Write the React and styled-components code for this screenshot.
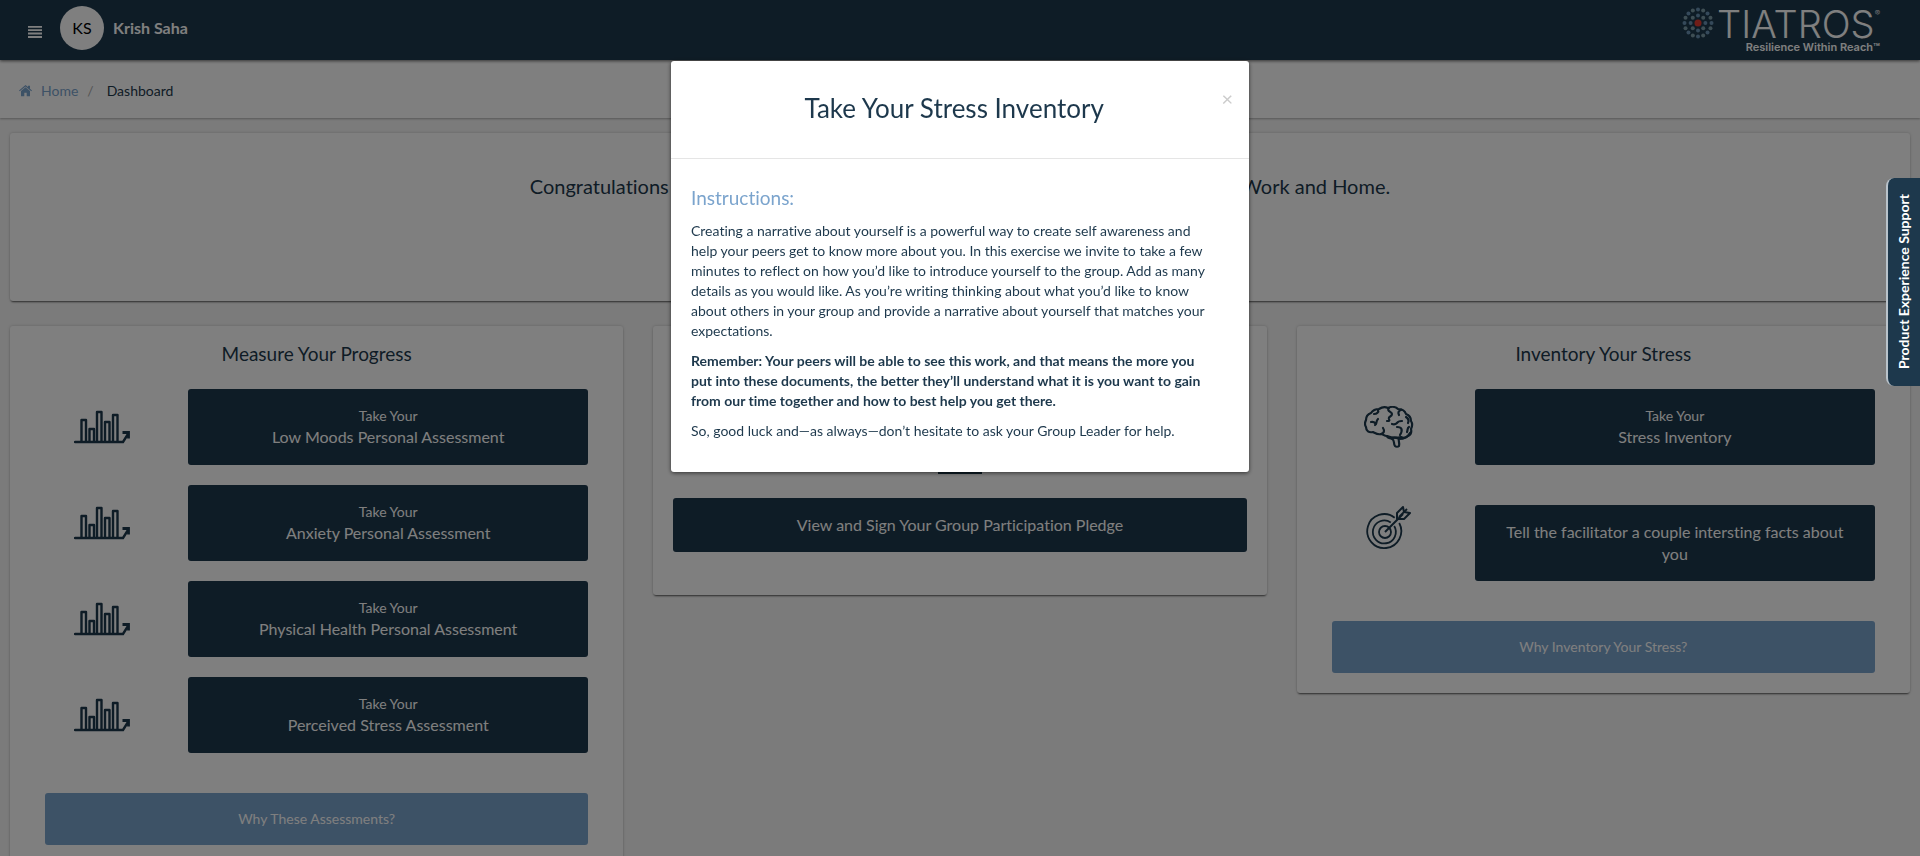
import React from "react";
import styled, { createGlobalStyle, css } from "styled-components";

const NAVY = "#1d384c";
const BLUE = "#7ba4cd";

const GlobalStyle = createGlobalStyle`
  *, *::before, *::after { box-sizing: border-box; }
  body {
    margin: 0;
    overflow: hidden;
    background: #f6f6f6;
    color: ${NAVY};
    font: 14px/20px Lato, "Liberation Sans", sans-serif;
    font-variant-ligatures: none;
  }
  h1, h2, h3, p { margin: 0; font-weight: 400; }
  button { font: inherit; cursor: pointer; }
`;

const Header = styled.header`
  display: flex;
  align-items: center;
  justify-content: space-between;
  height: 60px;
  padding: 0 40px 0 28px;
  background: ${NAVY};
  box-shadow: 0 1px 3px rgba(0, 0, 0, 0.6);
  position: relative;
`;

const UserArea = styled.div`
  display: flex;
  align-items: center;
  padding-bottom: 4px;
`;

const MenuButton = styled.button`
  display: flex;
  margin: 8px 18px 0 0;
  padding: 0;
  border: 0;
  background: none;
  color: #fff;
`;

const Avatar = styled.span`
  display: grid;
  place-items: center;
  width: 44px;
  height: 44px;
  margin-right: 9px;
  border-radius: 50%;
  background: #fff;
  color: #000;
  font-size: 16px;
`;

const UserName = styled.span`
  color: #fff;
  font-size: 16px;
  font-weight: 700;
`;

const Brand = styled.a`
  display: flex;
  align-items: flex-start;
  gap: 3px;
  height: 46px;
  color: #fff;
  text-decoration: none;
`;

const BrandWords = styled.span`
  display: flex;
  flex-direction: column;
  align-items: flex-end;
`;

const BrandName = styled.span`
  display: flex;
  font-family: Inter, Lato, sans-serif;
  font-size: 38px;
  font-weight: 300;
  line-height: 34px;
`;

const BrandMark = styled.span`
  font-size: 8px;
  line-height: 12px;
`;

const Tagline = styled.span`
  font-family: Inter, Lato, sans-serif;
  font-size: 11px;
  font-weight: 600;
  line-height: 12px;
`;

const Breadcrumb = styled.nav`
  display: flex;
  align-items: center;
  gap: 9px;
  height: 58px;
  padding: 4px 19px 0;
  background: #fff;
  box-shadow: 0 1px 2px rgba(0, 0, 0, 0.3);
`;

const Crumb = styled.a`
  display: flex;
  align-items: center;
  gap: 9px;
  color: ${BLUE};
  text-decoration: none;
`;

const Slash = styled.span`
  margin-right: 4px;
  color: #aaa;
`;

const Main = styled.main`
  display: flex;
  flex-direction: column;
  gap: 25px;
  padding: 15px 10px;
`;

const Card = styled.section`
  border-radius: 3px;
  background: #fff;
  box-shadow: 0 2px 2px -1px rgba(0, 0, 0, 0.6), 0 0 3px rgba(0, 0, 0, 0.2);
`;

const Banner = styled(Card)`
  height: 168px;
  padding-top: 41px;
  font-size: 20px;
  line-height: 24px;
  text-align: center;
`;

const Columns = styled.div`
  display: grid;
  grid-template-columns: repeat(3, 1fr);
  align-items: start;
  gap: 30px;
`;

const Column = styled(Card)`
  display: flex;
  flex-direction: column;
  padding: 16px ${(p) => (p.$wide ? "20px 43px" : "35px 20px")};
`;

const ColumnTitle = styled.h2`
  margin-bottom: 23px;
  font-size: 19px;
  line-height: 24px;
  text-align: center;
`;

const Rows = styled.div`
  display: flex;
  flex-direction: column;
  gap: ${(p) => p.$gap}px;
`;

const Row = styled.div`
  display: grid;
  grid-template-columns: 21% 1fr;
  align-items: ${(p) => (p.$top ? "start" : "center")};
  column-gap: 29px;
`;

const RowIcon = styled.span`
  display: flex;
  justify-content: center;
`;

const solid = css`
  width: 100%;
  border: 0;
  border-radius: 3px;
  color: #fff;
`;

const ActionButton = styled.button`
  ${solid}
  min-height: ${(p) => (p.$slim ? 54 : 76)}px;
  padding: 4px 20px;
  background: ${NAVY};
  font-size: 16px;
  line-height: 22px;
`;

const Lead = styled.span`
  display: block;
  font-size: 14px;
  line-height: 20px;
`;

const WhyButton = styled.button`
  ${solid}
  height: 52px;
  margin-top: 40px;
  background: ${BLUE};
`;

const PledgeIcon = styled.span`
  display: flex;
  align-items: flex-end;
  justify-content: center;
  height: 156px;
  padding-bottom: 24px;
`;

const Backdrop = styled.div`
  position: fixed;
  inset: 0;
  display: flex;
  align-items: flex-start;
  justify-content: center;
  padding-top: 61px;
  background: rgba(0, 0, 0, 0.5);
`;

const Dialog = styled.section`
  width: 578px;
  max-width: 100%;
  border-radius: 3px;
  background: #fff;
  box-shadow: 0 1px 4px rgba(0, 0, 0, 0.6);
`;

const DialogHead = styled.div`
  display: flex;
  padding: 29px 16px 32px;
  border-bottom: 1px solid #e5e5e5;
`;

const DialogTitle = styled.h1`
  flex: 1;
  font-size: 26px;
  line-height: 36px;
  text-align: center;
`;

const CloseButton = styled.button`
  align-self: flex-start;
  padding: 0;
  border: 0;
  background: none;
  color: #ccc;
  font-size: 20px;
  line-height: 16px;
`;

const DialogBody = styled.div`
  display: flex;
  flex-direction: column;
  gap: 10px;
  padding: 26px 34px 31px 20px;
`;

const DialogHeading = styled.h3`
  color: ${BLUE};
  font-size: 19px;
  line-height: 26px;
`;

const Strong = styled.strong`
  font-weight: 700;
`;

const SupportTab = styled.button`
  position: fixed;
  top: 178px;
  right: 0;
  width: 34px;
  height: 208px;
  padding: 0;
  border: 0 solid #b9c3cb;
  border-left-width: 2px;
  border-radius: 8px 0 0 8px;
  background: ${NAVY};
  color: #fff;
  font-size: 14px;
  font-weight: 700;
  writing-mode: sideways-lr;
`;

function ring(count, radius, size, colors) {
  return Array.from({ length: count }, (_, i) => {
    const a = (i * 2 * Math.PI) / count;
    return (
      <circle
        key={`${radius}-${i}`}
        cx={16 + radius * Math.sin(a)}
        cy={16 - radius * Math.cos(a)}
        r={size}
        fill={colors[i % colors.length]}
      />
    );
  });
}

const LogoDots = () => (
  <svg width="32" height="32" viewBox="0 0 32 32" aria-hidden="true">
    {ring(16, 13.5, 2, ["#6a93b5", "#7d9ca8"])}
    {ring(8, 7.4, 2, ["#6a93b5", "#7d9ca8"])}
    <circle cx="16" cy="16" r="3.5" fill="#e03a30" />
  </svg>
);

const MenuIcon = () => (
  <svg width="14" height="12" viewBox="0 0 14 12" fill="currentColor" aria-hidden="true">
    <path d="M0 0h14v1.800H0zM0 3.300h14v1.800H0zM0 6.600h14v1.800H0zM0 10h14v2H0z" />
  </svg>
);

const HomeIcon = () => (
  <svg width="13" height="12" viewBox="0 0 13 12" fill="currentColor" aria-hidden="true">
    <path d="M6.5 2.2 11 6v5.2H7.7V7.8H5.3v3.4H2V6zM6.5 0 9 2V.7h2v3l2 1.8-.7.8L6.5 1.5.7 6.3 0 5.5z" />
  </svg>
);

const ChartIcon = () => (
  <svg width="56" height="36" viewBox="0 0 56 36" fill="none" stroke={NAVY} strokeWidth="2.400" aria-hidden="true">
    <path d="M1 33h48l5-8" strokeLinecap="round" />
    <path d="M48.500 23.500h6v6" strokeWidth="2.800" />
    <path d="M7.500 33V11h4.500v22M15.500 33V20h4.500v13M23 33V3h4.500v30M31 33V13h4.500v20M39 33V6h4.500v27" strokeLinejoin="round" />
  </svg>
);

const BrainIcon = () => (
  <svg width="50" height="42" viewBox="0 0 50 42" fill="none" stroke={NAVY} strokeWidth="2.200" strokeLinecap="round" strokeLinejoin="round" aria-hidden="true">
    <path d="M23 30c-3 0-4-2-6-2-3 1-6-1-8-2-4 1-7-1-7-5-2-3-1-5 0-7 0-4 2-6 5-7 2-3 5-4 8-4 3-2 7-2 9-1 4-2 8-1 10 1 4 0 7 2 8 5 3 1 5 4 5 7 2 3 1 6 0 8 1 4-1 6-3 7-2 2-5 2-7 1-4 1-9 1-14-1z" />
    <path d="M17 28c3-1 4-3 2-6M7 16c3-1 4 1 5 2 1-2 0-3 2-5M12 18l-1 1M14 4c1 2-1 4-4 4M25 2c-3 3 3 4 3 6 0 3-4 2-3 5 1 2 0 2-2 2M37 4c-3 1-3 3-2 5M28 18c3 1 4 0 5-1 1-2 3-2 5-2M33 21c5 0 6 3 3 8M42 11c3 2 3 4 2 6M43 26c1-2 0-4 2-5" />
    <path d="M23 30c0 2 3 2 5 3 3 1 1 4 3 7 1 1 3 1 4 0 1-3-1-5 0-7 6 0 9-2 11-6M29 32c3-1 4 0 6 1" />
  </svg>
);

const TargetIcon = () => (
  <svg width="46" height="46" viewBox="0 0 46 46" fill="none" stroke={NAVY} strokeWidth="1.800" aria-hidden="true">
    <path d="M28.700 12.700A17 17 0 1 0 33.200 18" />
    <path d="M24.800 17.400A11.500 11.500 0 1 0 28.200 21" />
    <circle cx="19" cy="27" r="6" />
    <path d="m19 27 18-18M31 14V8l6-6 1 5 6 1-6 6z" strokeWidth="2" strokeLinejoin="round" />
    <path d="m33 12 8-8" />
  </svg>
);

const PenIcon = () => (
  <svg width="44" height="48" viewBox="0 0 44 48" fill="none" stroke={NAVY} strokeWidth="2" aria-hidden="true">
    <path d="M1 1h42v46H1zM9 13h26M9 21h26M9 29h16" />
  </svg>
);

const assessments = [
  "Low Moods Personal Assessment",
  "Anxiety Personal Assessment",
  "Physical Health Personal Assessment",
  "Perceived Stress Assessment",
];

export default function App() {
  return (
    <>
      <GlobalStyle />
      <Header>
        <UserArea>
          <MenuButton aria-label="Menu"><MenuIcon /></MenuButton>
          <Avatar>KS</Avatar>
          <UserName>Krish Saha</UserName>
        </UserArea>
        <Brand href="#">
          <LogoDots />
          <BrandWords>
            <BrandName>TIATROS<BrandMark>®</BrandMark></BrandName>
            <Tagline>Resilience Within Reach™</Tagline>
          </BrandWords>
        </Brand>
      </Header>
      <Breadcrumb aria-label="Breadcrumb">
        <Crumb href="#"><HomeIcon />Home</Crumb>
        <Slash>/</Slash>
        <span>Dashboard</span>
      </Breadcrumb>
      <Main>
        <Banner>
          Congratulations on taking the first step toward building the resilience to thrive at Work and Home.
        </Banner>
        <Columns>
          <Column>
            <ColumnTitle>Measure Your Progress</ColumnTitle>
            <Rows $gap={20}>
              {assessments.map((name) => (
                <Row key={name}>
                  <RowIcon><ChartIcon /></RowIcon>
                  <ActionButton><Lead>Take Your</Lead>{name}</ActionButton>
                </Row>
              ))}
            </Rows>
            <WhyButton>Why These Assessments?</WhyButton>
          </Column>
          <Column $wide>
            <PledgeIcon><PenIcon /></PledgeIcon>
            <ActionButton $slim>View and Sign Your Group Participation Pledge</ActionButton>
          </Column>
          <Column>
            <ColumnTitle>Inventory Your Stress</ColumnTitle>
            <Rows $gap={40}>
              <Row>
                <RowIcon><BrainIcon /></RowIcon>
                <ActionButton><Lead>Take Your</Lead>Stress Inventory</ActionButton>
              </Row>
              <Row $top>
                <RowIcon><TargetIcon /></RowIcon>
                <ActionButton>Tell the facilitator a couple intersting facts about you</ActionButton>
              </Row>
            </Rows>
            <WhyButton>Why Inventory Your Stress?</WhyButton>
          </Column>
        </Columns>
      </Main>
      <Backdrop>
        <Dialog role="dialog" aria-modal="true" aria-labelledby="dialog-title">
          <DialogHead>
            <DialogTitle id="dialog-title">Take Your Stress Inventory</DialogTitle>
            <CloseButton aria-label="Close">×</CloseButton>
          </DialogHead>
          <DialogBody>
            <DialogHeading>Instructions:</DialogHeading>
            <p>
              Creating a narrative about yourself is a powerful way to create self awareness and help your
              peers get to know more about you. In this exercise we invite to take a few minutes to reflect
              on how you’d like to introduce yourself to the group. Add as many details as you would like.
              As you’re writing thinking about what you’d like to know about others in your group and
              provide a narrative about yourself that matches your expectations.
            </p>
            <p>
              <Strong>
                Remember: Your peers will be able to see this work, and that means the more you put into
                these documents, the better they’ll understand what it is you want to gain from our time
                together and how to best help you get there.
              </Strong>
            </p>
            <p>So, good luck and—as always—don’t hesitate to ask your Group Leader for help.</p>
          </DialogBody>
        </Dialog>
      </Backdrop>
      <SupportTab>Product Experience Support</SupportTab>
    </>
  );
}
